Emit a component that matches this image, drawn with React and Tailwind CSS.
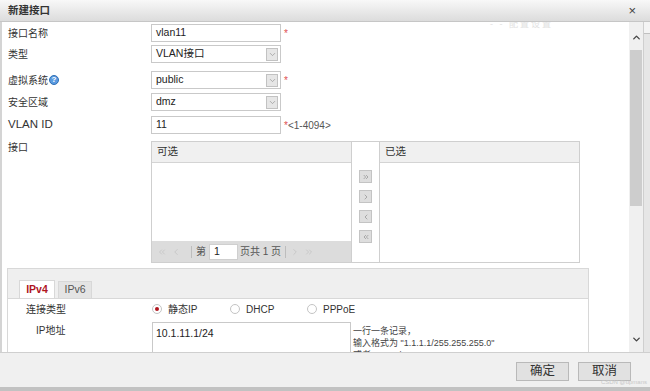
import { ChevronUp, ChevronDown, ChevronsLeft, ChevronLeft, ChevronRight, ChevronsRight } from 'lucide-react';

const font = "font-['Liberation_Sans','Noto_Sans_CJK_SC',sans-serif]";

const Label = ({ children, className = '' }) => (
  <div className={`w-[149px] shrink-0 pl-[6px] text-[10px] text-[#333] ${className}`}>{children}</div>
);

const TextInput = ({ value }) => (
  <div className="w-[130px] h-[18px] border border-[#c9c9c9] bg-white flex items-center px-[4px] text-[10.5px] text-[#222]">
    {value}
  </div>
);

const Select = ({ value }) => (
  <div className="w-[130px] h-[18px] border border-[#c9c9c9] bg-white flex items-center pl-[4px] pr-[2px] text-[10.5px] text-[#222]">
    <span className="flex-1">{value}</span>
    <span className="w-[12px] h-[13px] border border-[#c2c2c2] bg-[#e6e6e6] flex items-center justify-center">
      <ChevronDown size={9} strokeWidth={2} className="text-[#999]" />
    </span>
  </div>
);

const Star = () => <span className="text-[#e05050] text-[10px] ml-[3px] self-start mt-[2px]">*</span>;

const MoveBtn = ({ children }) => (
  <div className="w-[13px] h-[13px] border border-[#c4c4c4] bg-[#dedede] flex items-center justify-center text-[#8c8c8c]">
    {children}
  </div>
);

const Radio = ({ checked, label, className = '' }) => (
  <div className={`flex items-center ${className}`}>
    <span className="w-[10px] h-[10px] rounded-full border border-[#c4c4c4] bg-white flex items-center justify-center">
      {checked && <span className="w-[4px] h-[4px] rounded-full bg-[#b0151e]" />}
    </span>
    <span className="ml-[6px] text-[10px] text-[#333]">{label}</span>
  </div>
);

export default function App() {
  return (
    <div className={`w-[650px] h-[391px] bg-[#c8c8c8] flex flex-col overflow-hidden ${font}`}>
      {/* title bar */}
      <div className="h-[22px] shrink-0 bg-gradient-to-b from-[#f8f8f8] to-[#dcdcdc] border-b border-[#c6c6c6] flex items-center justify-between pl-[8px] pr-[14px]">
        <span className="text-[10.5px] font-bold text-[#333]">新建接口</span>
        <span className="text-[13px] text-[#444] leading-none">×</span>
      </div>

      {/* body */}
      <div className="h-[330px] shrink-0 flex">
        <div className="flex-1 bg-white border-l-2 border-[#d4d4d4] overflow-hidden relative">
          <div className="absolute left-[488px] -top-[4px] text-[9px] text-[#e2e2e2] tracking-[2px]">- - 配置设置</div>

          <div className="flex items-center mt-[2px] h-[18px]">
            <Label>接口名称</Label>
            <TextInput value="vlan11" />
            <Star />
          </div>
          <div className="flex items-center mt-[3px] h-[18px]">
            <Label>类型</Label>
            <Select value="VLAN接口" />
          </div>
          <div className="flex items-center mt-[8px] h-[18px]">
            <Label className="flex items-center">
              虚拟系统
              <span className="ml-[1px] w-[10px] h-[10px] rounded-full bg-[#5b9be0] border border-[#2f6fb5] text-white text-[8px] font-bold flex items-center justify-center leading-none">?</span>
            </Label>
            <Select value="public" />
            <Star />
          </div>
          <div className="flex items-center mt-[4px] h-[18px]">
            <Label>安全区域</Label>
            <Select value="dmz" />
          </div>
          <div className="flex items-center mt-[5px] h-[18px]">
            <Label className="text-[11.5px]">VLAN ID</Label>
            <TextInput value="11" />
            <span className="text-[#e05050] text-[10px] ml-[3px]">*</span>
            <span className="text-[10px] text-[#555]">&lt;1-4094&gt;</span>
          </div>

          {/* transfer table */}
          <div className="flex mt-[7px]">
            <Label className="-mt-[1px]">接口</Label>
            <div className="w-[429px] h-[122px] border border-[#cfcfcf] flex">
              <div className="w-[200px] flex flex-col border-r border-[#cfcfcf]">
                <div className="h-[21px] bg-[#f0f0f0] border-b border-[#d4d4d4] flex items-center pl-[5px] text-[10.5px] text-[#333]">可选</div>
                <div className="flex-1" />
                <div className="h-[21px] bg-[#dcdcdc] flex items-center pl-[5px] text-[10px] text-[#555]">
                  <span className="flex items-center text-[#c4c4c4]">
                    <ChevronsLeft size={10} strokeWidth={2} />
                    <ChevronLeft size={10} strokeWidth={2} className="ml-[4px]" />
                  </span>
                  <span className="w-px h-[12px] bg-[#bdbdbd] ml-[10px]" />
                  <span className="ml-[4px]">第</span>
                  <span className="ml-[3px] w-[29px] h-[16px] bg-white border border-[#cfcfcf] flex items-center pl-[4px] text-[10.5px] text-[#222]">1</span>
                  <span className="ml-[2px]">页共 1 页</span>
                  <span className="w-px h-[12px] bg-[#bdbdbd] ml-[4px]" />
                  <span className="flex items-center text-[#c4c4c4] ml-[4px]">
                    <ChevronRight size={10} strokeWidth={2} />
                    <ChevronsRight size={10} strokeWidth={2} className="ml-[4px]" />
                  </span>
                </div>
              </div>
              <div className="w-[27px] flex flex-col items-center pt-[28px] gap-[7px]">
                <MoveBtn><ChevronsRight size={8} strokeWidth={2} /></MoveBtn>
                <MoveBtn><ChevronRight size={8} strokeWidth={2} /></MoveBtn>
                <MoveBtn><ChevronLeft size={8} strokeWidth={2} /></MoveBtn>
                <MoveBtn><ChevronsLeft size={8} strokeWidth={2} /></MoveBtn>
              </div>
              <div className="flex-1 flex flex-col border-l border-[#cfcfcf]">
                <div className="h-[21px] bg-[#f0f0f0] border-b border-[#d4d4d4] flex items-center pl-[5px] text-[10.5px] text-[#333]">已选</div>
              </div>
            </div>
          </div>

          {/* IPv4 / IPv6 section */}
          <div className="ml-[5px] w-[582px] mt-[5px] border border-[#d8d8d8]">
            <div className="h-[29px] bg-[#efefef] flex items-end pl-[11px] gap-[3px]">
              <div className="w-[36px] h-[18px] bg-white border border-b-0 border-[#d8d8d8] flex items-center justify-center text-[10.5px] text-[#b0151e] font-bold">IPv4</div>
              <div className="w-[34px] h-[17px] bg-[#e4e4e4] border border-b-0 border-[#d8d8d8] flex items-center justify-center text-[10.5px] text-[#555]">IPv6</div>
            </div>
            <div className="bg-white border-t border-[#d8d8d8]">
              <div className="flex items-center h-[20px]">
                <div className="w-[144px] pl-[18px] text-[10px] text-[#333]">连接类型</div>
                <div className="flex items-center">
                  <Radio checked label="静态IP" className="w-[78px]" />
                  <Radio label="DHCP" className="w-[77px]" />
                  <Radio label="PPPoE" />
                </div>
              </div>
              <div className="flex mt-[3px]">
                <div className="w-[144px] pl-[28px] text-[10px] text-[#333] pt-[1px]">IP地址</div>
                <div className="w-[199px] h-[40px] border border-[#c9c9c9] px-[3px] pt-[3px] text-[10.5px] text-[#222]">10.1.11.1/24</div>
                <div className="ml-[2px] pt-[3px] text-[9px] leading-[12px] text-[#444]">
                  <div>一行一条记录，</div>
                  <div>输入格式为 "1.1.1.1/255.255.255.0"</div>
                  <div>或者1.1.1.1/24</div>
                </div>
              </div>
            </div>
          </div>
        </div>

        {/* scrollbar */}
        <div className="w-[14px] bg-[#f0f0f0] flex flex-col items-center pt-[2px]">
          <div className="h-[26px] flex items-center"><ChevronUp size={11} strokeWidth={3} className="text-[#444]" /></div>
          <div className="w-[12px] h-[156px] bg-[#cdcdcd]" />
          <div className="flex-1" />
          <div className="h-[26px] flex items-center"><ChevronDown size={11} strokeWidth={3} className="text-[#444]" /></div>
        </div>
        <div className="w-[7px] bg-[#e6e6e6] border-l border-[#cfcfcf] flex flex-col">
          <div className="h-[12px] border-b border-[#c0c0c0] bg-[#f4f4f4]" />
        </div>
      </div>

      {/* footer */}
      <div className="h-[35px] shrink-0 bg-[#f0f0f0] border-t border-[#cfcfcf] flex items-start justify-end pt-[9px] pr-[19px] gap-[9px] relative">
        <div className="w-[53px] h-[19px] bg-[#e1e1e1] border border-[#b9b9b9] flex items-center justify-center text-[12.5px] text-[#333]">确定</div>
        <div className="w-[53px] h-[19px] bg-[#e1e1e1] border border-[#b9b9b9] flex items-center justify-center text-[12.5px] text-[#333]">取消</div>
        <span className="absolute right-[3px] bottom-[2px] text-[6px] text-[#c8c8c8] leading-none">CSDN @upmans</span>
      </div>
      <div className="flex-1 bg-[#c2c2c2]" />
    </div>
  );
}
